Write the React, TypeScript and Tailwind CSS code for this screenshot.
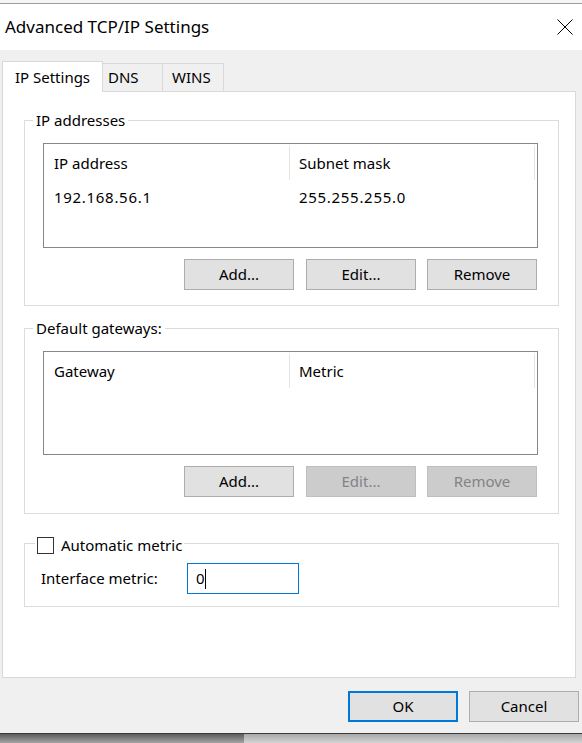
import React from "react";

type Column = { title: string; cells: string[] };

function GroupBox({
  legend,
  className,
  children,
}: {
  legend: React.ReactNode;
  className: string;
  children: React.ReactNode;
}) {
  return (
    <div className={`relative ml-[21px] w-[535px] border border-[#dcdcdc] ${className}`}>
      <span className="absolute -top-[11px] left-[8px] flex h-[20px] items-center bg-white px-[3px]">
        {legend}
      </span>
      {children}
    </div>
  );
}

function ListView({ columns, height }: { columns: Column[]; height: string }) {
  return (
    <div className={`ml-[18px] mt-[22px] w-[495px] border border-[#828790] bg-white ${height}`}>
      <div className="flex h-[38px]">
        <div className="flex w-[245px] items-center pl-[10px]">{columns[0].title}</div>
        <div className="my-[2px] w-px bg-[#e5e5e5]" />
        <div className="flex w-[244px] items-center pl-[9px]">{columns[1].title}</div>
        <div className="my-[2px] w-px bg-[#e5e5e5]" />
      </div>
      {columns[0].cells.map((cell, i) => (
        <div key={i} className="flex h-[30px] items-center tracking-[0.7px]">
          <div className="w-[246px] pl-[10px]">{cell}</div>
          <div className="pl-[9px]">{columns[1].cells[i]}</div>
        </div>
      ))}
    </div>
  );
}

function Button({
  label,
  disabled,
  primary,
  className = "",
}: {
  label: string;
  disabled?: boolean;
  primary?: boolean;
  className?: string;
}) {
  const look = disabled
    ? "border border-[#bfbfbf] bg-[#cccccc] text-[#838383]"
    : primary
      ? "border-2 border-[#0078d7] bg-[#e1e1e1] text-black"
      : "border border-[#adadad] bg-[#e1e1e1] text-black";
  return (
    <button
      type="button"
      className={`flex h-[31px] w-[110px] items-center justify-center text-[15px] ${look} ${className}`}
    >
      {label}
    </button>
  );
}

function ButtonRow({ editable }: { editable: boolean }) {
  return (
    <div className="mt-[11px] flex justify-end pr-[21px]">
      <Button label="Add..." className="mr-[12px]" />
      <Button label="Edit..." disabled={!editable} className="mr-[11px]" />
      <Button label="Remove" disabled={!editable} />
    </div>
  );
}

export default function App() {
  return (
    <div className="flex h-[743px] w-[582px] flex-col overflow-hidden bg-[#f0f0f0] font-['Noto_Sans',sans-serif] text-[15px] text-black">
      {/* window edge */}
      <div className="h-[3px] bg-[#f5f5f5]" />
      <div className="h-px bg-[#9c9c9c]" />

      {/* title bar */}
      <div className="flex h-[46px] items-center justify-between bg-white pl-[5px] pr-[9px]">
        <span className="text-[17px]">Advanced TCP/IP Settings</span>
        <svg width="16" height="16" viewBox="0 0 16 16" fill="none" stroke="#000" strokeWidth="1">
          <path d="M0.5 0.5L15.5 15.5M15.5 0.5L0.5 15.5" />
        </svg>
      </div>

      {/* tabs */}
      <div className="mt-[11px] flex h-[30px] items-end pl-[2px]">
        <div className="relative z-10 -mb-px flex h-[31px] w-[101px] items-center justify-center border-l border-r border-t border-[#d9d9d9] bg-white">
          IP Settings
        </div>
        <div className="flex h-[28px] w-[60px] items-center border-r border-t border-[#d9d9d9] pl-[5px]">
          DNS
        </div>
        <div className="flex h-[28px] w-[61px] items-center border-r border-t border-[#d9d9d9] pl-[9px]">
          WINS
        </div>
      </div>

      {/* tab page */}
      <div className="ml-[2px] h-[587px] w-[574px] border border-[#d9d9d9] bg-white">
        <GroupBox legend="IP addresses" className="mt-[28px] h-[186px]">
          <ListView
            height="h-[105px]"
            columns={[
              { title: "IP address", cells: ["192.168.56.1"] },
              { title: "Subnet mask", cells: ["255.255.255.0"] },
            ]}
          />
          <ButtonRow editable />
        </GroupBox>

        <GroupBox legend="Default gateways:" className="mt-[22px] h-[186px]">
          <ListView
            height="h-[104px]"
            columns={[
              { title: "Gateway", cells: [] },
              { title: "Metric", cells: [] },
            ]}
          />
          <ButtonRow editable={false} />
        </GroupBox>

        <div className="relative ml-[21px] mt-[29px] h-[64px] w-[535px] border border-[#dcdcdc]">
          <span className="absolute -top-[9px] left-[10px] flex h-[20px] items-center gap-[7px] bg-white px-[2px]">
            <span className="h-[17px] w-[17px] border border-[#333333] bg-white" />
            Automatic metric
          </span>
          <div className="mt-[19px] flex items-center pl-[16px]">
            <span className="w-[146px]">Interface metric:</span>
            <div className="flex h-[31px] w-[112px] items-center border border-[#0078d7] pl-[8px]">
              0<span className="inline-block h-[20px] w-px bg-black" />
            </div>
          </div>
        </div>
      </div>

      {/* dialog buttons */}
      <div className="mt-[13px] flex justify-end gap-[11px] pr-[3px]">
        <Button label="OK" primary />
        <Button label="Cancel" />
      </div>

      {/* desktop behind the window */}
      <div className="mt-[11px] flex h-[10px] border-t border-[#3a3a3a]">
        <div className="w-[244px] bg-gradient-to-b from-[#5e5e5e] to-[#a4a4a4]" />
        <div className="flex-1 bg-gradient-to-b from-[#a8a8a8] to-[#d4d4d4]" />
      </div>
    </div>
  );
}
